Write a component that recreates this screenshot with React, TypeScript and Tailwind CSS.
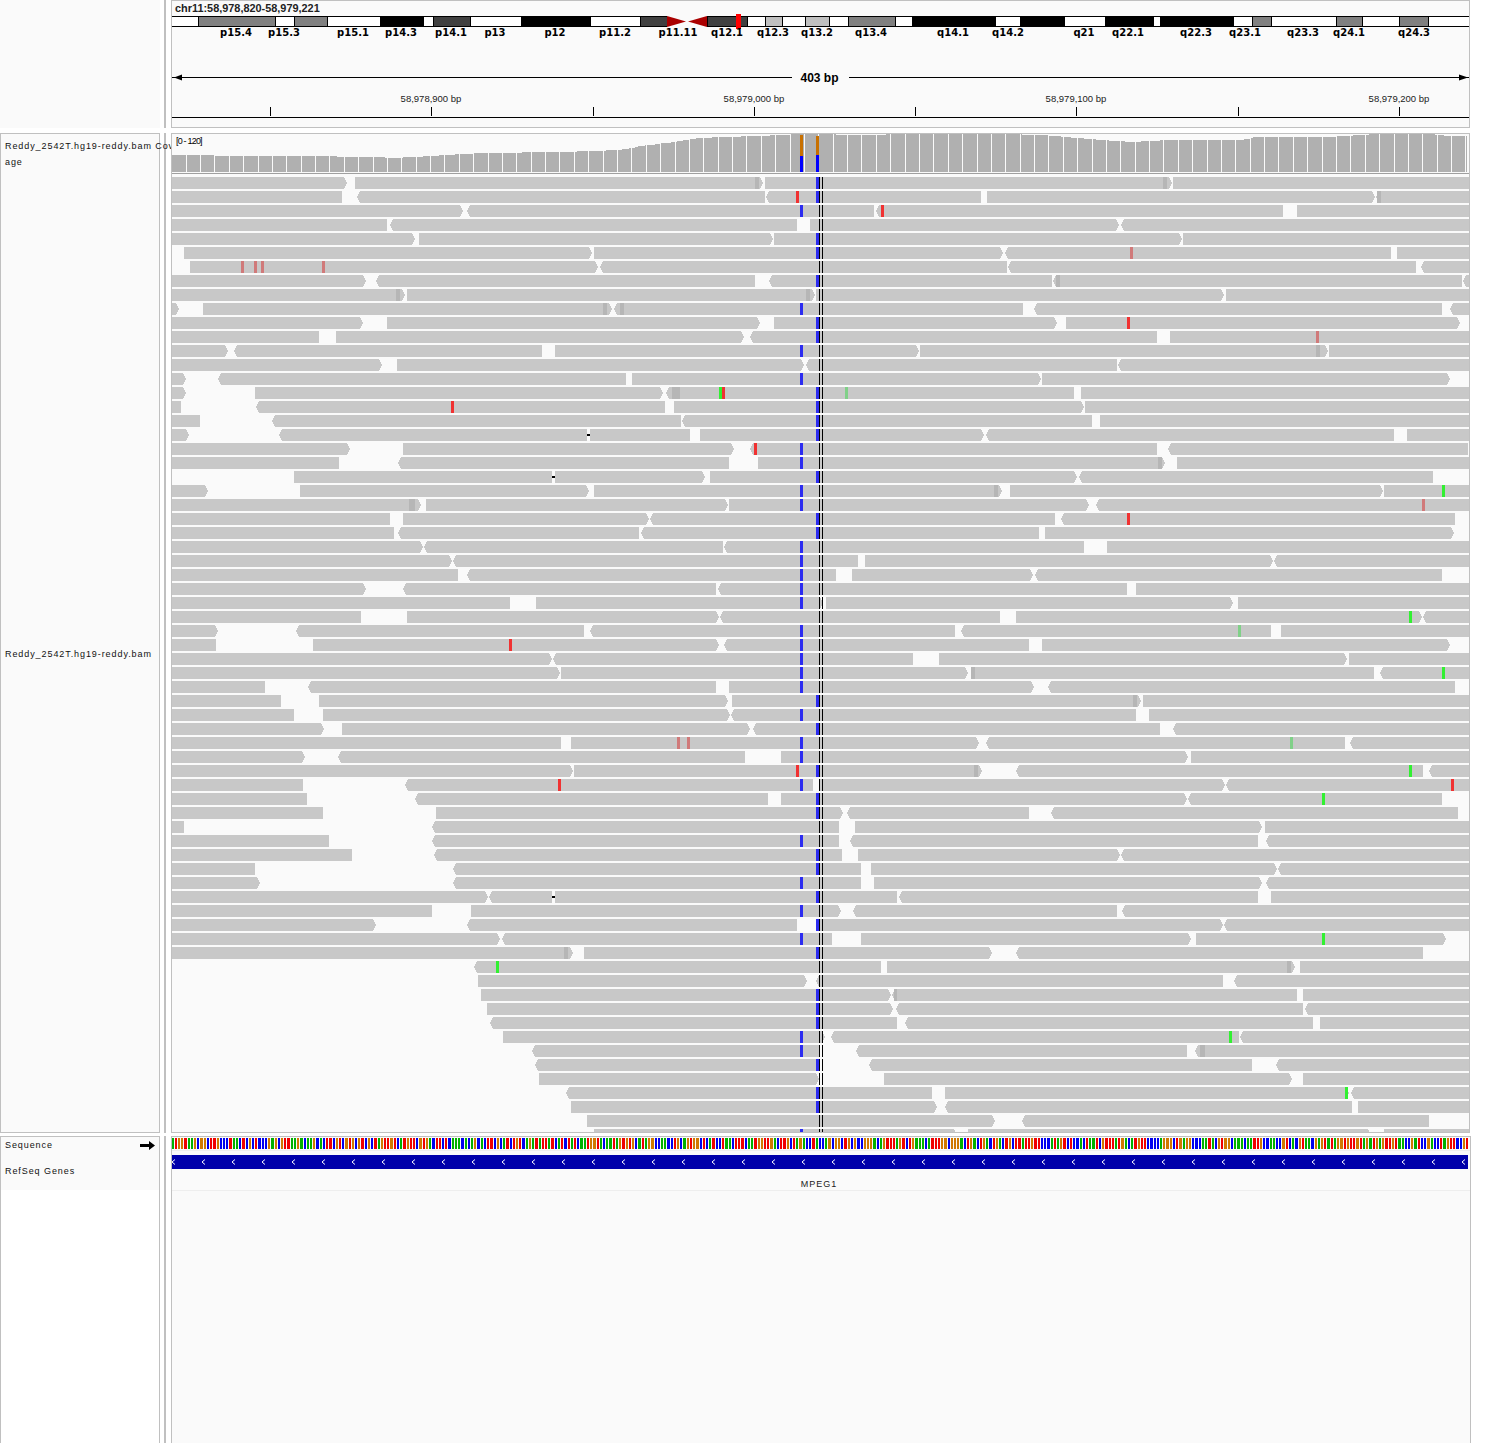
// Purpose: IGV genome browser view with ideogram, coverage, read pileup, sequence and gene tracks.

const bands: [number, number, string][] = [
  [172, 198, "#ffffff"], [198, 275, "#808080"], [275, 294, "#ffffff"], [294, 327, "#808080"],
  [327, 380, "#ffffff"], [380, 423, "#000000"], [423, 433, "#ffffff"], [433, 470, "#404040"],
  [470, 521, "#ffffff"], [521, 590, "#000000"], [590, 640, "#ffffff"], [640, 667, "#404040"],
  [707, 747, "#404040"], [747, 765, "#ffffff"], [765, 782, "#c0c0c0"], [782, 805, "#ffffff"],
  [805, 829, "#c0c0c0"], [829, 848, "#ffffff"], [848, 895, "#808080"], [895, 912, "#ffffff"],
  [912, 995, "#000000"], [995, 1020, "#ffffff"], [1020, 1064, "#000000"], [1064, 1105, "#ffffff"],
  [1105, 1153, "#000000"], [1153, 1160, "#ffffff"], [1160, 1233, "#000000"], [1233, 1252, "#ffffff"],
  [1252, 1271, "#808080"], [1271, 1336, "#ffffff"], [1336, 1362, "#808080"], [1362, 1399, "#ffffff"],
  [1399, 1428, "#808080"], [1428, 1470, "#ffffff"],
];

const bandLabels: [string, number][] = [
  ["p15.4", 236], ["p15.3", 284], ["p15.1", 353], ["p14.3", 401], ["p14.1", 451], ["p13", 495],
  ["p12", 555], ["p11.2", 615], ["p11.11", 678], ["q12.1", 727], ["q12.3", 773], ["q13.2", 817],
  ["q13.4", 871], ["q14.1", 953], ["q14.2", 1008], ["q21", 1084], ["q22.1", 1128], ["q22.3", 1196],
  ["q23.1", 1245], ["q23.3", 1303], ["q24.1", 1349], ["q24.3", 1414],
];

const ticks: [number, string?][] = [
  [270], [431, "58,978,900 bp"], [593], [754, "58,979,000 bp"], [915], [1076, "58,979,100 bp"], [1238], [1399, "58,979,200 bp"],
];

// top edge of the coverage histogram, page x -> page y
const coverageProfile: [number, number][] = [
  [172, 155], [250, 156], [300, 156], [370, 157], [395, 158], [430, 156], [480, 153], [560, 152], [620, 150],
  [640, 146], [680, 141], [700, 138], [720, 137], [760, 136], [800, 134], [870, 135], [900, 134], [1000, 134],
  [1040, 135], [1100, 140], [1130, 142], [1170, 140], [1200, 140], [1240, 140], [1255, 137], [1330, 137],
  [1375, 134], [1430, 134], [1445, 136], [1468, 136],
];

// reads: start-end, optional arrow r/l, optional @x:w soft-clip shade. marks: A/B blue columns, r p g q k + x
const rows: [string, string][] = [
  ["172-347r 355-763r@755 765-1173r@1164 1174-1470", "B"],
  ["172-342 357-765l 766-981l 987-1376r 1377-1470l@1378", "r796 B"],
  ["172-463r 467-874l 876-1284l 1298-1470", "A r881"],
  ["172-387 390-797l 810-1119r 1121-1470l", ""],
  ["172-415r 419-773r 774-1183r 1184-1470", "B"],
  ["184-592r 594-1003r 1005-1392l 1398-1470", "B p1130"],
  ["190-598r 600-1007l 1008-1417l 1422-1470l", "p241 p254 p261 p322"],
  ["172-366r 376-755l 769-1052l 1053-1463l@1056 1464-1470l", "B"],
  ["172-405r@396 407-815r@806 816-1225r 1227-1470", ""],
  ["172-179r 203-612r@603 614-1023l@620 1034-1443l 1451-1470l", "A"],
  ["172-363r 387-760r 774-1057r 1066-1461r", "B r1127"],
  ["172-319 336-744r 750-1158l 1171-1470", "B p1317"],
  ["172-228r 234-542l 555-919r 920-1329r@1317 1330-1470", "A"],
  ["172-382r 397-804r 806-1117l 1118-1470l", ""],
  ["172-186r 218-626l 632-1041r 1042-1451r", "A"],
  ["172-186r 255-663r 666-1074l@672:8 1081-1470", "g719 r722 B q845"],
  ["172-181 256-665l 674-1084r 1085-1470", "r451 B"],
  ["172-200 272-681l 682-1092l 1100-1470", "B"],
  ["172-189r 279-587l 590-690 700-984r 986-1395l 1408-1470", "k587 B"],
  ["172-350r 403-734r 750-1158l 1169-1469l", "r754 A"],
  ["172-339 398-729l 758-1166r@1159 1178-1470", "A"],
  ["294-552 555-705r 710-1077r 1079-1434l", "k552 B"],
  ["172-208r 300-589r 594-1002r@994 1010-1384r 1385-1470", "A g1443"],
  ["172-421r@409:6 426-728r 729-1089r 1096-1470l", "A p1423"],
  ["172-390 403-649r 650-1055l 1061-1456l", "B r1127"],
  ["172-394 398-639l 641-1039l 1045-1455r", "B"],
  ["172-423r 424-723l 724-1084l 1107-1470", "A"],
  ["172-452r 453-858l 865-1274r 1275-1470l", "A"],
  ["172-458 467-836l 852-1033r 1035-1443l", "A"],
  ["172-366r 403-716l 718-1127l 1136-1470", "A"],
  ["172-510 536-823r 826-1234r 1239-1470", "A"],
  ["172-361 407-719r 720-1000l 1016-1423r 1424-1470l", "g1410"],
  ["172-218r 296-584l 590-955l 961-1272l 1282-1470", "A q1239"],
  ["172-216 313-719r 724-1029l 1042-1451r", "r509 A"],
  ["172-552r 553-913l 939-1348r 1350-1470", "A"],
  ["172-560r 561-968r 971-1375l@971 1381-1470l", "A g1443"],
  ["172-265 308-716l 729-1034r 1048-1456l", "A"],
  ["172-281 319-728r 732-1141r@1133 1143-1470", "B"],
  ["172-294 323-730r 731-1136l 1150-1470", "A"],
  ["172-324r 342-750r 753-1161l 1174-1470l", "B"],
  ["172-561 571-979r 986-1346l 1351-1470l", "p677 p687 A q1291"],
  ["172-305r 338-745l 781-1189r 1192-1470", "A"],
  ["172-573r 574-982r@974 1016-1424l 1430-1470l", "r796 B g1410"],
  ["172-303 405-813l 820-1226r 1227-1470l", "r558 A r1452"],
  ["172-307 415-768l 781-1188r 1189-1443l", "B g1323"],
  ["172-323 436-843r 847-1029l 1051-1459l", "B"],
  ["172-184 432-839l 855-1263r 1266-1470", ""],
  ["172-329 432-839l 850-1259l 1267-1470l", "A"],
  ["172-352 434-842l 858-1120r 1121-1470l", "B"],
  ["172-255 453-861l 871-1278r 1279-1470l", "B"],
  ["172-260r 453-861l 874-1263r 1267-1470l", "A"],
  ["172-488r 489-552l 555-897 899-1259l 1272-1470", "k552 B"],
  ["172-432 471-841r 853-1117l 1122-1470l", "A"],
  ["172-376r 467-797l 816-1224r 1225-1470l", "B"],
  ["172-500r 502-832l 861-1192r 1197-1447r", "A g1323"],
  ["172-573r@564 584-992r 1016-1424l", "B"],
  ["474-881l 887-1296r@1288 1301-1470", "g496"],
  ["478-807r 816-1224l 1235-1470l", ""],
  ["481-891r 892-1298l@894:3 1304-1470", "B"],
  ["487-893r 896-1304l 1306-1470l", "B"],
  ["490-897l 905-1314l 1321-1470", "B"],
  ["503-825r 831-1240l 1241-1470l", "A g1230"],
  ["532-820l 856-1188l 1196-1470l@1201:5", "A"],
  ["535-820l 869-1253l 1277-1470l", "B"],
  ["539-819r 884-1293r 1304-1470", ""],
  ["566-932l 945-1350r 1352-1470l", "B g1346"],
  ["571-937r 945-1353l 1359-1470", "B"],
  ["587-995r 1022-1430l", ""],
  ["594-957r 968-1372r 1385-1470", "A"],
];

const markColors: Record<string, string> = { r: "#f03232", p: "#d07a7a", g: "#32f032", q: "#80d088" };
const baseColors = ["#00b000", "#d07800", "#f00000", "#0000f0"];

function coverageTop(x: number) {
  for (let i = 1; i < coverageProfile.length; i++) {
    const [x0, y0] = coverageProfile[i - 1];
    const [x1, y1] = coverageProfile[i];
    if (x <= x1) return Math.round(y0 + ((y1 - y0) * (x - x0)) / (x1 - x0));
  }
  return 136;
}

// positions right of the centre line were measured about 1px long by the far edge
function nudge(x: number) {
  return x > 820 ? Math.round(x - (x - 820) / 650) : x;
}

function readPoints(start: number, end: number, dir: string, y: number) {
  if (dir === "r") return `${start},${y} ${end - 3},${y} ${end},${y + 6} ${end - 3},${y + 12} ${start},${y + 12}`;
  if (dir === "l") return `${start + 3},${y} ${end},${y} ${end},${y + 12} ${start + 3},${y + 12} ${start},${y + 6}`;
  return `${start},${y} ${end},${y} ${end},${y + 12} ${start},${y + 12}`;
}

function HeaderTrack() {
  return (
    <svg width={1297} height={126} viewBox="172 1 1297 126" shapeRendering="crispEdges" className="block">
      <text x={175} y={12} fill="#222222" className="font-['Liberation_Sans'] text-[10.9px] font-bold">
        chr11:58,978,820-58,979,221
      </text>

      <rect x={172} y={16} width={1298} height={11} fill="#000000" />
      {bands.map(([a, b, color]) => (
        <rect key={a} x={a === 172 ? a : a + 1} y={17} width={a === 172 ? b - a : b - a - 1} height={9} fill={color} />
      ))}
      <rect x={667} y={16} width={40} height={11} fill="#fafafa" />
      <polygon points="667,16 686,21.5 667,27" fill="#aa0000" shapeRendering="auto" />
      <polygon points="707,16 688,21.5 707,27" fill="#aa0000" shapeRendering="auto" />
      <rect x={736} y={14} width={5} height={15} fill="#ff0000" />
      {bandLabels.map(([label, x]) => (
        <text key={label} x={x} y={36} textAnchor="middle" fill="#000000" className="font-['DejaVu_Sans'] text-[10px] font-bold">
          {label}
        </text>
      ))}

      <rect x={172} y={77} width={620} height={1} fill="#000000" />
      <rect x={849} y={77} width={621} height={1} fill="#000000" />
      <polygon points="174,77.5 182,74.5 182,80.5" fill="#000000" shapeRendering="auto" />
      <polygon points="1468,77.5 1459,74.5 1459,80.5" fill="#000000" shapeRendering="auto" />
      <text x={819.5} y={82} textAnchor="middle" fill="#000000" className="font-['Liberation_Sans'] text-[12px] font-bold">
        403 bp
      </text>

      <rect x={172} y={117} width={1298} height={1} fill="#000000" />
      {ticks.map(([x, label]) => (
        <g key={x}>
          <rect x={x} y={107} width={1} height={9} fill="#000000" />
          {label && (
            <text x={x} y={102} textAnchor="middle" fill="#222222" className="font-['Liberation_Sans'] text-[9.5px]">
              {label}
            </text>
          )}
        </g>
      ))}
    </svg>
  );
}

function CoverageBars() {
  const bars = [];
  for (let x = 172; x < 1468; x += 3.22) {
    const top = coverageTop(x);
    const left = Math.floor(x);
    bars.push(<rect key={x} x={left} y={top} width={4} height={172 - top} fill="#b0b0b0" />);
  }
  const gaps = [];
  for (let k = 0; k < 90; k++) {
    gaps.push(<rect key={k} x={Math.round(185.6 + k * 14.38)} y={133} width={1} height={40} fill="#fafafa" />);
  }
  return (
    <g>
      {bars}
      {gaps}
      <rect x={1467} y={133} width={4} height={40} fill="#fafafa" />
      <rect x={800} y={135} width={3} height={21} fill="#c87000" />
      <rect x={800} y={156} width={3} height={16} fill="#0000ff" />
      <rect x={816} y={136} width={3} height={19} fill="#c87000" />
      <rect x={816} y={155} width={3} height={17} fill="#0000ff" />
      <rect x={172} y={173} width={1298} height={1} fill="#a0a0a0" />
    </g>
  );
}

function ReadRow({ index, reads, marks }: { index: number; reads: string; marks: string }) {
  const y = 177 + index * 14;
  return (
    <g>
      {reads.split(" ").map((token) => {
        const m = token.match(/^(\d+)-(\d+)([rl]?)(?:@(\d+)(?::(\d+))?)?$/);
        if (!m) return null;
        const start = nudge(Number(m[1]));
        const end = nudge(Number(m[2]));
        return (
          <g key={token}>
            <polygon points={readPoints(start, end, m[3], y)} fill="#c8c8c8" />
            {m[4] && <rect x={nudge(Number(m[4]))} y={y} width={Number(m[5] ?? 4)} height={12} fill="#b6b6b6" />}
          </g>
        );
      })}
      {marks.split(" ").filter(Boolean).map((token) => {
        if (token === "A") return <rect key={token} x={800} y={y} width={3} height={12} fill="#2c2cf0" />;
        if (token === "B") return <rect key={token} x={816} y={y} width={3} height={12} fill="#2c2cf0" />;
        const x = nudge(Number(token.slice(1)));
        if (token[0] === "k") return <rect key={token} x={x} y={y + 5} width={3} height={2} fill="#000000" />;
        return <rect key={token} x={x} y={y} width={3} height={12} fill={markColors[token[0]]} />;
      })}
    </g>
  );
}

function AlignmentTrack() {
  return (
    <svg width={1297} height={998} viewBox="172 134 1297 998" shapeRendering="crispEdges" className="block">
      <CoverageBars />
      <text x={176} y={144} fill="#000000" className="font-['Liberation_Sans'] text-[9px] tracking-[-0.8px]">
        [0 - 120]
      </text>
      {rows.map(([reads, marks], index) => (
        <ReadRow key={index} index={index} reads={reads} marks={marks} />
      ))}
      <line x1={819.5} y1={177} x2={819.5} y2={1132} stroke="#000000" strokeDasharray="12 2" />
      <line x1={822.5} y1={177} x2={822.5} y2={1132} stroke="#000000" strokeDasharray="12 2" />
    </svg>
  );
}

function SequenceBars() {
  const bars = [];
  let seed = 7;
  for (let i = 0; i < 403; i++) {
    seed = (seed * 1103515245 + 12345) % 2147483648;
    const x = Math.floor(172 + i * 3.22);
    const next = Math.floor(172 + (i + 1) * 3.22);
    bars.push(<rect key={i} x={x} y={1138} width={next - x - 1} height={11} fill={baseColors[(seed >> 16) & 3]} />);
  }
  return <g>{bars}</g>;
}

function GeneTrack() {
  const chevrons = [];
  for (let x = 172; x < 1468; x += 30) {
    chevrons.push(<polyline key={x} points={`${x + 3},1159.5 ${x},1162 ${x + 3},1164.5`} fill="none" stroke="#ffffff" shapeRendering="auto" />);
  }
  return (
    <svg width={1298} height={306} viewBox="172 1137 1298 306" shapeRendering="crispEdges" className="block">
      <SequenceBars />
      <rect x={172} y={1150} width={1298} height={1} fill="#eeeeee" />
      <rect x={172} y={1155} width={1296} height={14} fill="#0000aa" />
      {chevrons}
      <text x={819} y={1187} textAnchor="middle" fill="#222222" className="font-['Liberation_Sans'] text-[9px] tracking-[1px]">
        MPEG1
      </text>
      <rect x={172} y={1190} width={1298} height={1} fill="#eeeeee" />
    </svg>
  );
}

function Splitter() {
  return (
    <div className="flex w-[11px] shrink-0 justify-center pr-[2px]">
      <div className="w-[2px] bg-[#c0c0c0]" />
    </div>
  );
}

const labelClass = "whitespace-nowrap pl-[4px] font-['Liberation_Sans'] text-[9px] tracking-[0.92px] text-[#111111]";

export default function App() {
  return (
    <div className="flex h-[1443px] w-[1489px] flex-col overflow-hidden bg-white">
      <div className="flex h-[128px] shrink-0">
        <div className="w-[160px] shrink-0 bg-[#fafafa]" />
        <Splitter />
        <div className="w-[1299px] border border-[#c0c0c0] bg-[#fafafa]">
          <HeaderTrack />
        </div>
      </div>

      <div className="mt-[5px] flex h-[1000px] shrink-0">
        <div className="flex w-[160px] shrink-0 flex-col border border-[#c0c0c0] bg-[#fafafa]">
          <div className="relative z-10 flex h-[39px] w-[170px] flex-col gap-[6px] overflow-hidden pt-[7px] leading-[10px]">
            <div className={labelClass}>Reddy_2542T.hg19-reddy.bam Cov</div>
            <div className={labelClass}>age</div>
          </div>
          <div className="flex flex-1 items-center pt-[4px]">
            <div className={labelClass}>Reddy_2542T.hg19-reddy.bam</div>
          </div>
        </div>
        <Splitter />
        <div className="w-[1299px] overflow-hidden border border-[#c0c0c0] bg-[#fafafa]">
          <AlignmentTrack />
        </div>
      </div>

      <div className="mt-[3px] flex min-h-0 flex-1">
        <div className="w-[160px] shrink-0 border-x border-t border-[#c0c0c0] bg-white">
          <div className="flex h-[53px] flex-col gap-[16px] bg-[#fafafa] pt-[3px] leading-[10px]">
            <div className="flex items-center justify-between pr-[4px]">
              <div className={labelClass}>Sequence</div>
              <svg width={15} height={9} viewBox="0 0 15 9" className="block">
                <polygon points="0,3 9,3 9,0 15,4.5 9,9 9,6 0,6" fill="#000000" />
              </svg>
            </div>
            <div className={labelClass}>RefSeq Genes</div>
          </div>
        </div>
        <Splitter />
        <div className="w-[1300px] overflow-hidden border-x border-t border-[#c0c0c0] bg-[#fafafa]">
          <GeneTrack />
        </div>
      </div>
    </div>
  );
}
